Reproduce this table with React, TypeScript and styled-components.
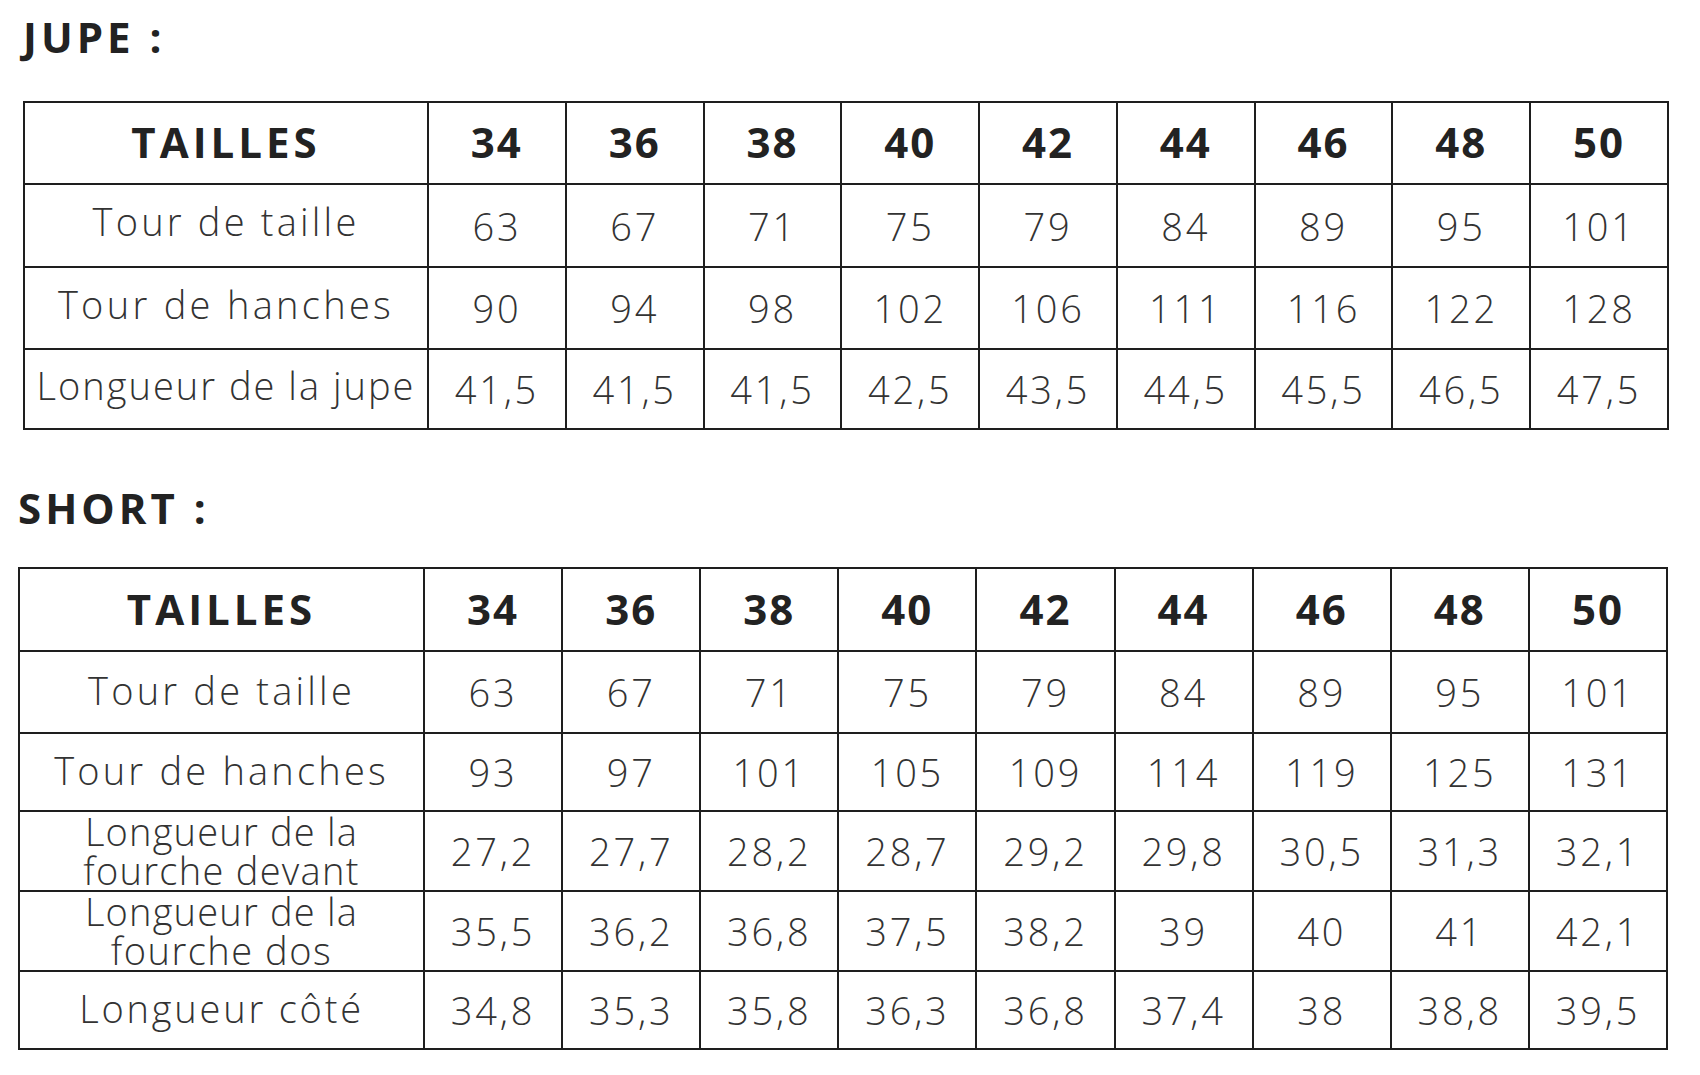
import { FC } from 'react';
import styled, { createGlobalStyle } from 'styled-components';

const GlobalStyle = createGlobalStyle`
  html, body {
    margin: 0;
    padding: 0;
    background: #ffffff;
  }
  body {
    font-family: 'Open Sans', 'Noto Sans', sans-serif;
    color: #222222;
  }
`;

const Page = styled.div`
  width: 1700px;
  padding: 16px 0 0 17px;
  box-sizing: border-box;
`;

const Section = styled.section<{ $indent: number; $top: number }>`
  margin-top: ${({ $top }) => $top}px;
  padding-left: ${({ $indent }) => $indent}px;
`;

const Title = styled.h2<{ $gap: number }>`
  margin: 0 0 ${({ $gap }) => $gap}px 0;
  font-size: 42px;
  line-height: 42px;
  font-weight: 700;
  letter-spacing: 4px;
  color: #222222;
`;

const Table = styled.table<{ $width: number }>`
  width: ${({ $width }) => $width}px;
  border-collapse: collapse;
  table-layout: fixed;
`;

const Row = styled.tr<{ $height: number }>`
  height: ${({ $height }) => $height}px;
`;

const HeadCell = styled.th<{ $wide?: boolean }>`
  border: 2px solid #1e1e1e;
  padding: 0 0 3px 0;
  text-align: center;
  vertical-align: middle;
  font-size: 42px;
  font-weight: 700;
  letter-spacing: ${({ $wide }) => ($wide ? '4px' : '2px')};
  color: #222222;
  white-space: nowrap;
`;

const LabelCell = styled.td<{ $lift: number }>`
  border: 2px solid #1e1e1e;
  padding: 0 0 ${({ $lift }) => $lift}px 0;
  text-align: center;
  vertical-align: middle;
  font-size: 38px;
  font-weight: 300;
  line-height: 39px;
  white-space: nowrap;
  color: #333333;
`;

const LabelLine = styled.div<{ $tracking: number }>`
  letter-spacing: ${({ $tracking }) => $tracking}px;
`;

const ValueCell = styled.td`
  border: 2px solid #1e1e1e;
  padding: 0;
  text-align: center;
  vertical-align: middle;
  font-size: 38px;
  font-weight: 300;
  letter-spacing: 2.8px;
  white-space: nowrap;
  color: #333333;
`;

const sizes = ['34', '36', '38', '40', '42', '44', '46', '48', '50'];

interface MeasureRow {
  label: { text: string; tracking: number }[];
  values: string[];
  height: number;
}

const skirtRows: MeasureRow[] = [
  {
    label: [{ text: 'Tour de taille', tracking: 3.2 }],
    values: ['63', '67', '71', '75', '79', '84', '89', '95', '101'],
    height: 83,
  },
  {
    label: [{ text: 'Tour de hanches', tracking: 3.3 }],
    values: ['90', '94', '98', '102', '106', '111', '116', '122', '128'],
    height: 82,
  },
  {
    label: [{ text: 'Longueur de la jupe', tracking: 2 }],
    values: ['41,5', '41,5', '41,5', '42,5', '43,5', '44,5', '45,5', '46,5', '47,5'],
    height: 80,
  },
];

const shortRows: MeasureRow[] = [
  {
    label: [{ text: 'Tour de taille', tracking: 3.2 }],
    values: ['63', '67', '71', '75', '79', '84', '89', '95', '101'],
    height: 82,
  },
  {
    label: [{ text: 'Tour de hanches', tracking: 3.2 }],
    values: ['93', '97', '101', '105', '109', '114', '119', '125', '131'],
    height: 78,
  },
  {
    label: [
      { text: 'Longueur de la', tracking: 1.2 },
      { text: 'fourche devant', tracking: 1.3 },
    ],
    values: ['27,2', '27,7', '28,2', '28,7', '29,2', '29,8', '30,5', '31,3', '32,1'],
    height: 79,
  },
  {
    label: [
      { text: 'Longueur de la', tracking: 1.2 },
      { text: 'fourche dos', tracking: 1.5 },
    ],
    values: ['35,5', '36,2', '36,8', '37,5', '38,2', '39', '40', '41', '42,1'],
    height: 80,
  },
  {
    label: [{ text: 'Longueur côté', tracking: 2.8 }],
    values: ['34,8', '35,3', '35,8', '36,3', '36,8', '37,4', '38', '38,8', '39,5'],
    height: 78,
  },
];

interface SizeTableProps {
  rows: MeasureRow[];
  width: number;
  labelWidth: number;
  headHeight: number;
  labelLift: number;
}

const SizeTable: FC<SizeTableProps> = ({ rows, width, labelWidth, headHeight, labelLift }) => (
  <Table $width={width}>
    <colgroup>
      <col style={{ width: labelWidth }} />
      {sizes.map((s) => (
        <col key={s} />
      ))}
    </colgroup>
    <thead>
      <Row $height={headHeight}>
        <HeadCell $wide>TAILLES</HeadCell>
        {sizes.map((s) => (
          <HeadCell key={s}>{s}</HeadCell>
        ))}
      </Row>
    </thead>
    <tbody>
      {rows.map((row) => (
        <Row key={row.label.map((l) => l.text).join(' ')} $height={row.height}>
          <LabelCell $lift={row.label.length > 1 ? 0 : labelLift}>
            {row.label.map((line, i) => (
              <LabelLine key={i} $tracking={line.tracking}>
                {line.text}
              </LabelLine>
            ))}
          </LabelCell>
          {row.values.map((v, i) => (
            <ValueCell key={i}>{v}</ValueCell>
          ))}
        </Row>
      ))}
    </tbody>
  </Table>
);

const App: FC = () => (
  <Page>
    <GlobalStyle />
    <Section $indent={6} $top={0}>
      <Title $gap={43}>JUPE :</Title>
      <SizeTable rows={skirtRows} width={1646} labelWidth={404} headHeight={82} labelLift={8} />
    </Section>
    <Section $indent={1} $top={57}>
      <Title $gap={38}>SHORT :</Title>
      <SizeTable rows={shortRows} width={1650} labelWidth={405} headHeight={83} labelLift={3} />
    </Section>
  </Page>
);

export default App;
